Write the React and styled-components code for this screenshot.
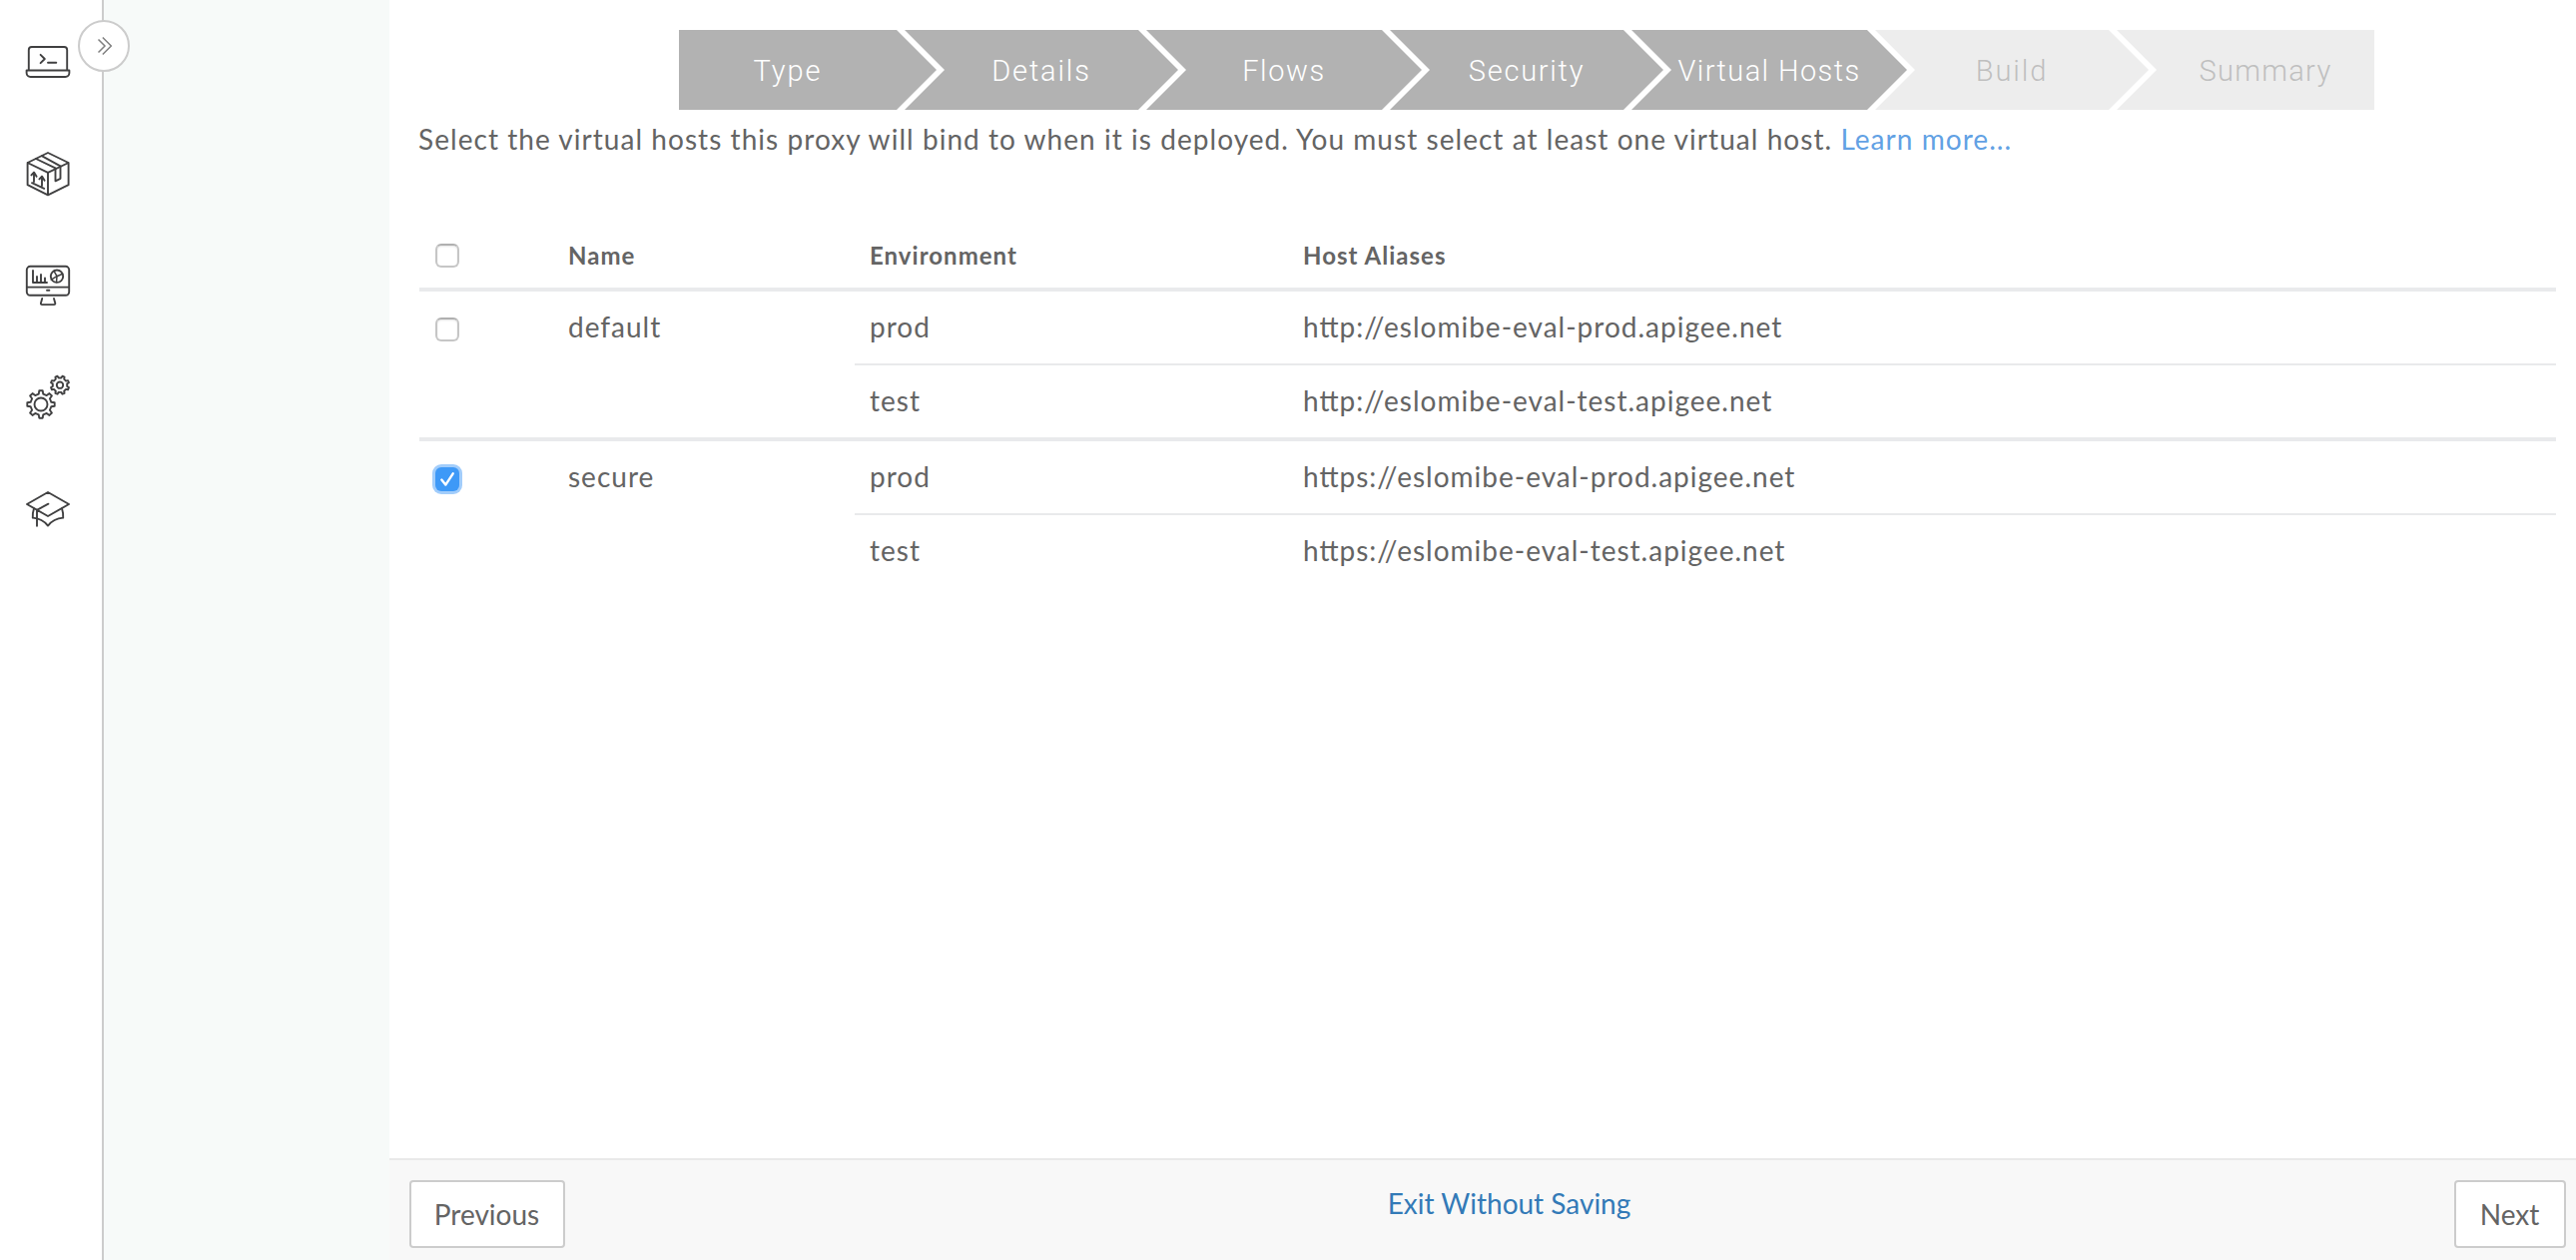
import React, { useState } from "react";
import styled, { createGlobalStyle, css } from "styled-components";

const GlobalStyle = createGlobalStyle`
  * { box-sizing: border-box; }
  body {
    margin: 0;
    background: #fff;
    color: #646464;
    font-family: Lato, "Open Sans", sans-serif;
    font-size: 28px;
    line-height: 40px;
  }
`;

const Page = styled.div`
  display: flex;
  height: 1262px;
  overflow: hidden;
`;

const Sidebar = styled.nav`
  position: relative;
  flex: 0 0 104px;
  display: flex;
  flex-direction: column;
  gap: 64px;
  padding: 38px 0 0 24px;
  border-right: 2px solid #ccc;
`;

const NavIcon = styled.svg`
  display: block;
  width: 48px;
  height: 48px;
  fill: none;
  stroke: #404041;
  stroke-width: 1.9;
  stroke-linecap: round;
  stroke-linejoin: round;
`;

const ExpandButton = styled.button`
  position: absolute;
  top: 20px;
  right: -28px;
  display: flex;
  align-items: center;
  justify-content: center;
  width: 52px;
  height: 52px;
  padding: 0;
  border: 2px solid #ccc;
  border-radius: 50%;
  background: #fff;
  z-index: 1;
  svg {
    width: 20px;
    height: 20px;
    fill: none;
    stroke: #808080;
    stroke-width: 1.5;
  }
`;

const SubNav = styled.aside`
  flex: 0 0 286px;
  background: #f7faf9;
`;

const Main = styled.main`
  flex: 1;
  min-width: 0;
  display: flex;
  flex-direction: column;
`;

const Content = styled.section`
  flex: 1;
  padding: 30px 20px 0 30px;
`;

const Steps = styled.ol`
  display: flex;
  width: 1698px;
  height: 80px;
  margin: 0 0 0 260px;
  padding: 0;
  list-style: none;
`;

const firstShape = css`
  padding-right: 40px;
  clip-path: polygon(0 0, calc(100% - 40px) 0, 100% 50%, calc(100% - 40px) 100%, 0 100%);
`;
const middleShape = css`
  clip-path: polygon(0 0, calc(100% - 40px) 0, 100% 50%, calc(100% - 40px) 100%, 0 100%, 40px 50%);
`;
const lastShape = css`
  padding-left: 40px;
  clip-path: polygon(0 0, 100% 0, 100% 100%, 0 100%, 40px 50%);
`;

const Step = styled.li`
  flex: 0 0 ${(p) => p.$width}px;
  display: flex;
  align-items: center;
  justify-content: center;
  padding-top: 1px;
  background: ${(p) => (p.$done ? "#b2b2b2" : "#ededed")};
  color: ${(p) => (p.$done ? "#fff" : "#bfbfbf")};
  font-family: Roboto, "Liberation Sans", sans-serif;
  font-weight: 300;
  font-size: 29px;
  letter-spacing: ${(p) => p.$tracking}px;
  white-space: nowrap;
  & + & {
    margin-left: -32px;
  }
  ${(p) => (p.$place === "first" ? firstShape : p.$place === "last" ? lastShape : middleShape)}
`;

const Intro = styled.p`
  margin: 9px 0 0 -1px;
  letter-spacing: 1.045px;
  white-space: nowrap;
`;

const Link = styled.a`
  color: ${(p) => (p.$strong ? "#337ab7" : "#62a1e4")};
  text-decoration: none;
`;

const Table = styled.div`
  margin-top: 63px;
`;

const TableHead = styled.div`
  display: grid;
  grid-template-columns: 149px 302px 434px 1fr;
  height: 66px;
  font-size: 24px;
  font-weight: 700;
  letter-spacing: 1.02px;
  line-height: 67px;
`;

const Group = styled.div`
  display: grid;
  grid-template-columns: 149px 287px 1fr;
  border-top: 4px solid #e9eaec;
  letter-spacing: 1px;
`;

const CheckCell = styled.div`
  padding: ${(p) => p.$pad}px 0 0 16px;
`;

const Name = styled.div`
  padding-top: 15px;
`;

const Host = styled.div`
  display: grid;
  grid-template-columns: 434px 1fr;
  height: 72px;
  padding: 15px 0 0 15px;
  & + & {
    box-sizing: content-box;
    height: 57px;
    border-top: 2px solid #e9eaeb;
  }
`;

const Url = styled.span`
  font-feature-settings: "liga" 1;
`;

const Checkbox = styled.input`
  appearance: none;
  display: block;
  width: 24px;
  height: 24px;
  margin: 0;
  border: 2px solid #c6c6c6;
  border-top-color: #b0b0b0;
  border-radius: 6px;
  background: #fff;
  box-shadow: inset 0 1px 2px #e4e4e4;
  &:checked {
    border: 0;
    background: #3e99f7;
    box-shadow: 0 0 0 3px #a2cdfb;
  }
`;

const CheckWrap = styled.label`
  display: block;
  position: relative;
  width: 24px;
  height: 24px;
  svg {
    position: absolute;
    inset: 0;
    fill: none;
    stroke: #fff;
    stroke-width: 2.4;
    stroke-linecap: round;
    stroke-linejoin: round;
    pointer-events: none;
  }
`;

const Footer = styled.footer`
  display: flex;
  justify-content: space-between;
  height: 102px;
  padding: 20px 10px 0 20px;
  border-top: 2px solid #e9e9e9;
  background: #f8f8f8;
`;

const Button = styled.button`
  width: ${(p) => p.$width}px;
  height: 68px;
  padding: 0 1px 1px 0;
  border: 2px solid #ccc;
  border-radius: 4px;
  background: #fff;
  color: #646464;
  font: inherit;
`;

const Exit = styled.div`
  padding: 3px 1px 0 0;
`;

function gear(cx, cy, outer, root, teeth, phase) {
  const points = [];
  const step = (Math.PI * 2) / teeth;
  const at = (r, a) => {
    points.push(`${(cx + r * Math.sin(a)).toFixed(2)} ${(cy - r * Math.cos(a)).toFixed(2)}`);
  };
  for (let i = 0; i < teeth; i++) {
    const a = i * step + phase;
    at(root, a - step * 0.27);
    at(outer, a - step * 0.16);
    at(outer, a + step * 0.16);
    at(root, a + step * 0.27);
  }
  return `M${points.join("L")}Z`;
}

const icons = [
  <>
    <path d="M4.8 31.5V12a3 3 0 0 1 3-3h32.400a3 3 0 0 1 3 3v19.500M2.600 32.500h42.800v2.500a4 4 0 0 1-4 4H6.600a4 4 0 0 1-4-4z" />
    <path d="M16.600 16.800l4.200 4.200-4.200 4.200M24 24.700h8.300" />
  </>,
  <>
    <path d="M24 3l20.600 10v22.200L24 45.300 3.600 35.200V13zM3.600 13L24 22.900 44.600 13M24 22.900v22.400" />
    <path d="M12 9l19.500 9.300v13l5-2.500v-12.500L17.800 6.200" />
    <path d="M10 32v-9M7.400 25.400L10 22.600l2.600 4.200M18 36v-9M15.400 29.400l2.600-2.800 2.600 4.200M8 33.200l12.200 5.600" />
  </>,
  <>
    <rect x="2.800" y="4.800" width="42.400" height="29" rx="3.500" />
    <path d="M3 25.600h42M23 28.700h2.400M18.200 37l-1.300 4.700q-.2 1.400 1.200 1.400h12q1.400 0 1.200-1.400L30 37" />
    <path d="M9 9v12h14M13 21v-6M17 21v-8M21 21v-4.500" />
    <circle cx="33" cy="14.700" r="6.200" />
    <path d="M33 14.700l-3-5.400M33 14.700l5.700-2.500M33 14.700l-.5 6M33 14.700l-5.800 3.500" strokeWidth="1.500" />
  </>,
  <>
    <path d={gear(17, 31, 13.8, 10.6, 8, 0)} />
    <circle cx="17" cy="31" r="6.500" />
    <path d={gear(36, 11.700, 9.3, 7.3, 8, Math.PI / 8)} />
    <circle cx="36" cy="11.700" r="3.200" />
  </>,
  <>
    <path d="M24 7l21 12-21 12L3 19zM24.400 18.700L13 24.800v16" />
    <path d="M10 23.300q-1.500 4.500-1.200 9.300 9.600.6 15.200 8 5.600-7.400 15.200-8 .3-4.800-1.200-9.300" />
  </>,
];

const steps = [
  ["Type", 258, 1.9],
  ["Details", 274, 1.85],
  ["Flows", 276, 1.6],
  ["Security", 274, 1.75],
  ["Virtual Hosts", 276, 1.4],
  ["Build", 274, 1.9],
  ["Summary", 258, 1.3],
];

const groups = [
  {
    name: "default",
    hosts: [
      ["prod", "http://eslomibe-eval-prod.apigee.net"],
      ["test", "http://eslomibe-eval-test.apigee.net"],
    ],
  },
  {
    name: "secure",
    hosts: [
      ["prod", "https://eslomibe-eval-prod.apigee.net"],
      ["test", "https://eslomibe-eval-test.apigee.net"],
    ],
  },
];

function Check({ checked, onChange }) {
  return (
    <CheckWrap>
      <Checkbox type="checkbox" checked={checked} onChange={onChange} />
      {checked && (
        <svg width="24" height="24">
          <path d="M6.300 12.600l4 5 7.400-11.300" />
        </svg>
      )}
    </CheckWrap>
  );
}

export default function App() {
  const [selected, setSelected] = useState({ default: false, secure: true });
  const all = groups.every((g) => selected[g.name]);
  const toggleAll = () => setSelected({ default: !all, secure: !all });

  return (
    <>
      <GlobalStyle />
      <Page>
        <Sidebar>
          {icons.map((icon, i) => (
            <NavIcon key={i} viewBox="0 0 48 48">
              {icon}
            </NavIcon>
          ))}
          <ExpandButton>
            <svg viewBox="0 0 20 20">
              <path d="M4.500 3.500l6.500 6.500-6.500 6.500M8.800 1.500l8.500 8.500-8.500 8.500" />
            </svg>
          </ExpandButton>
        </Sidebar>
        <SubNav />
        <Main>
          <Content>
            <Steps>
              {steps.map(([label, width, tracking], i) => (
                <Step
                  key={label}
                  $width={width}
                  $tracking={tracking}
                  $done={i < 5}
                  $place={i === 0 ? "first" : i === steps.length - 1 ? "last" : "middle"}
                >
                  {label}
                </Step>
              ))}
            </Steps>
            <Intro>
              Select the virtual hosts this proxy will bind to when it is deployed. You must select at
              least one virtual host. <Link>Learn more...</Link>
            </Intro>
            <Table>
              <TableHead>
                <CheckCell $pad={22}>
                  <Check checked={all} onChange={toggleAll} />
                </CheckCell>
                <span>Name</span>
                <span>Environment</span>
                <span>Host Aliases</span>
              </TableHead>
              {groups.map((g) => (
                <Group key={g.name}>
                  <CheckCell $pad={26}>
                    <Check
                      checked={selected[g.name]}
                      onChange={() => setSelected({ ...selected, [g.name]: !selected[g.name] })}
                    />
                  </CheckCell>
                  <Name>{g.name}</Name>
                  <div>
                    {g.hosts.map(([env, url]) => (
                      <Host key={env}>
                        <span>{env}</span>
                        <Url>{url}</Url>
                      </Host>
                    ))}
                  </div>
                </Group>
              ))}
            </Table>
          </Content>
          <Footer>
            <Button $width={156}>Previous</Button>
            <Exit>
              <Link $strong>Exit Without Saving</Link>
            </Exit>
            <Button $width={112}>Next</Button>
          </Footer>
        </Main>
      </Page>
    </>
  );
}
